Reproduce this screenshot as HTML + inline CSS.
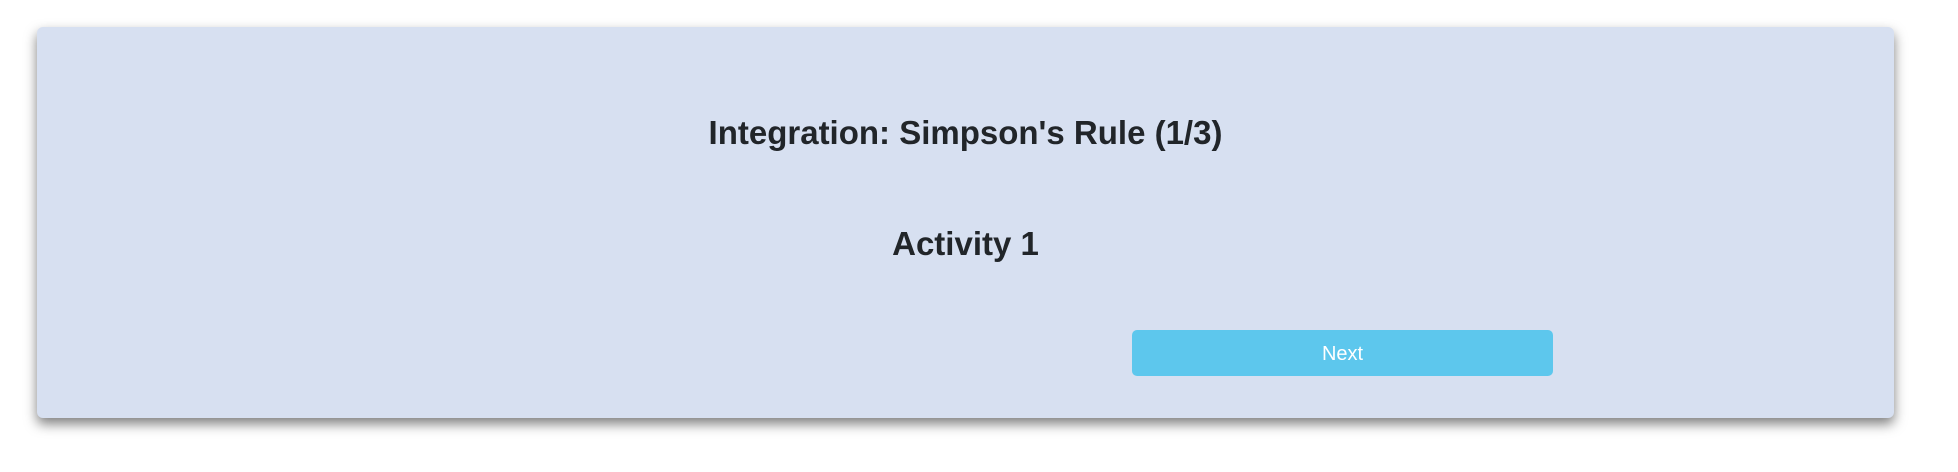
<!DOCTYPE html>
<html><head><style>
html,body{margin:0;padding:0;width:1958px;height:472px;background:#fff;overflow:hidden;font-family:"Liberation Sans",Arial,sans-serif;}
.card{position:absolute;left:37px;top:27px;width:1857px;height:391px;background:#d7e0f1;border-radius:6px;box-shadow:0 6px 12px rgba(0,0,0,0.5);}
.t{position:absolute;left:0;width:100%;text-align:center;font-weight:bold;font-size:33px;color:#212529;line-height:1;}
.btn{position:absolute;left:1095px;top:303px;width:421px;height:46px;background:#5dc7ed;border-radius:5px;color:#fff;font-size:20px;text-align:center;line-height:48px;}
</style></head><body>
<div class="card">
<div class="t" style="top:89px">Integration: Simpson's Rule (1/3)</div>
<div class="t" style="top:200px">Activity 1</div>
<div class="btn">Next</div>
</div>
</body></html>
